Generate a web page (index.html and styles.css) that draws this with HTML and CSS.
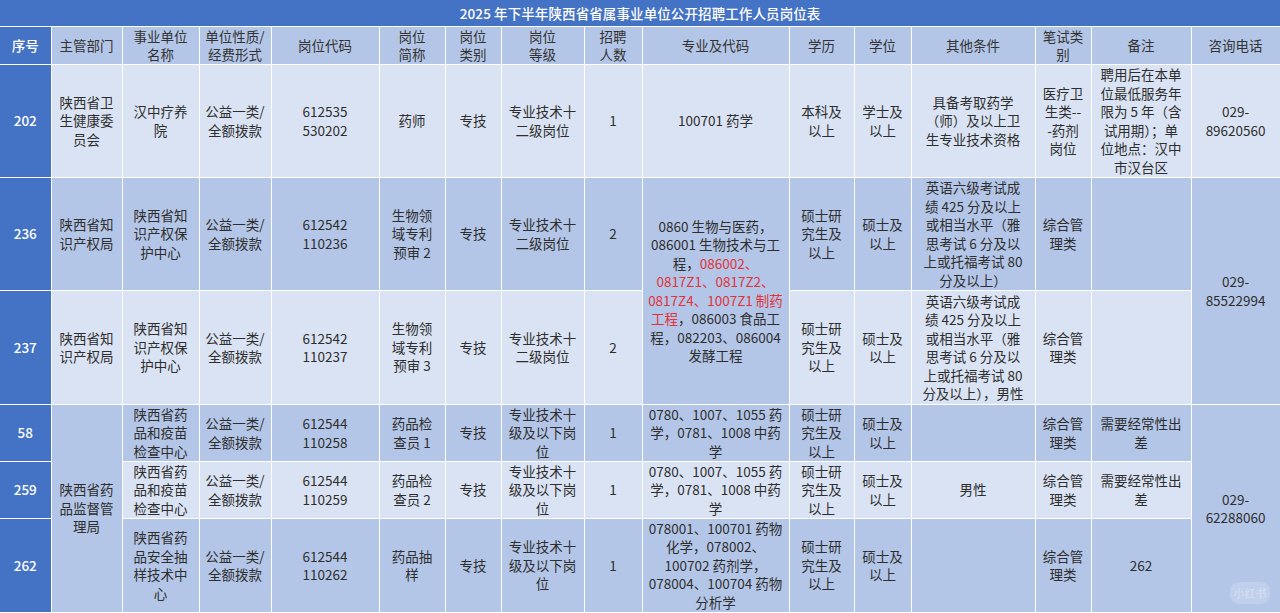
FILE: index.html
```html
<!DOCTYPE html>
<html lang="zh-CN">
<head>
<meta charset="utf-8">
<title>岗位表</title>
<link rel="stylesheet" href="styles.css">
</head>
<body>
<div class="page">
<table class="jobs">
<colgroup>
<col style="width:51px"><col style="width:71px"><col style="width:77px"><col style="width:72px"><col style="width:108px"><col style="width:66px"><col style="width:56px"><col style="width:83px"><col style="width:58px"><col style="width:147px"><col style="width:65px"><col style="width:57px"><col style="width:124px"><col style="width:56px"><col style="width:100px"><col style="width:89px">
</colgroup>
<tr class="r-title"><td colspan="16" class="title">2025 年下半年陕西省省属事业单位公开招聘工作人员岗位表</td></tr>
<tr class="r-head">
<td class="idx">序号</td><td>主管部门</td><td>事业单位<br>名称</td><td>单位性质/<br>经费形式</td><td>岗位代码</td><td>岗位<br>简称</td><td>岗位<br>类别</td><td>岗位<br>等级</td><td>招聘<br>人数</td><td>专业及代码</td><td>学历</td><td>学位</td><td>其他条件</td><td>笔试类<br>别</td><td>备注</td><td>咨询电话</td>
</tr>
<tr class="r-a light">
<td class="idx">202</td><td>陕西省卫<br>生健康委<br>员会</td><td>汉中疗养<br>院</td><td>公益一类/<br>全额拨款</td><td>612535<br>530202</td><td>药师</td><td>专技</td><td>专业技术十<br>二级岗位</td><td>1</td><td>100701 药学</td><td>本科及<br>以上</td><td>学士及<br>以上</td><td>具备考取药学<br>（师）及以上卫<br>生专业技术资格</td><td>医疗卫<br>生类--<br>-药剂<br>岗位</td><td>聘用后在本单<br>位最低服务年<br>限为 5 年（含<br>试用期）；单<br>位地点：汉中<br>市汉台区</td><td>029-<br>89620560</td>
</tr>
<tr class="r-b mid">
<td class="idx">236</td><td>陕西省知<br>识产权局</td><td>陕西省知<br>识产权保<br>护中心</td><td>公益一类/<br>全额拨款</td><td>612542<br>110236</td><td>生物领<br>域专利<br>预审 2</td><td>专技</td><td>专业技术十<br>二级岗位</td><td>2</td><td rowspan="2" class="mid">0860 生物与医药，<br>086001 生物技术与工<br>程，<span class="red">086002、<br>0817Z1、0817Z2、<br>0817Z4、1007Z1 制药<br>工程</span>，086003 食品工<br>程，082203、086004<br>发酵工程</td><td>硕士研<br>究生及<br>以上</td><td>硕士及<br>以上</td><td>英语六级考试成<br>绩 425 分及以上<br>或相当水平（雅<br>思考试 6 分及以<br>上或托福考试 80<br>分及以上）</td><td>综合管<br>理类</td><td></td><td rowspan="2" class="mid">029-<br>85522994</td>
</tr>
<tr class="r-c light">
<td class="idx">237</td><td>陕西省知<br>识产权局</td><td>陕西省知<br>识产权保<br>护中心</td><td>公益一类/<br>全额拨款</td><td>612542<br>110237</td><td>生物领<br>域专利<br>预审 3</td><td>专技</td><td>专业技术十<br>二级岗位</td><td>2</td><td>硕士研<br>究生及<br>以上</td><td>硕士及<br>以上</td><td>英语六级考试成<br>绩 425 分及以上<br>或相当水平（雅<br>思考试 6 分及以<br>上或托福考试 80<br>分及以上），男性</td><td>综合管<br>理类</td><td></td>
</tr>
<tr class="r-d mid">
<td class="idx">58</td><td rowspan="3" class="mid">陕西省药<br>品监督管<br>理局</td><td>陕西省药<br>品和疫苗<br>检查中心</td><td>公益一类/<br>全额拨款</td><td>612544<br>110258</td><td>药品检<br>查员 1</td><td>专技</td><td>专业技术十<br>级及以下岗<br>位</td><td>1</td><td>0780、1007、1055 药<br>学，0781、1008 中药<br>学</td><td>硕士研<br>究生及<br>以上</td><td>硕士及<br>以上</td><td></td><td>综合管<br>理类</td><td>需要经常性出<br>差</td><td rowspan="3" class="mid">029-<br>62288060</td>
</tr>
<tr class="r-d light">
<td class="idx">259</td><td>陕西省药<br>品和疫苗<br>检查中心</td><td>公益一类/<br>全额拨款</td><td>612544<br>110259</td><td>药品检<br>查员 2</td><td>专技</td><td>专业技术十<br>级及以下岗<br>位</td><td>1</td><td>0780、1007、1055 药<br>学，0781、1008 中药<br>学</td><td>硕士研<br>究生及<br>以上</td><td>硕士及<br>以上</td><td>男性</td><td>综合管<br>理类</td><td>需要经常性出<br>差</td>
</tr>
<tr class="r-e mid">
<td class="idx">262</td><td>陕西省药<br>品安全抽<br>样技术中<br>心</td><td>公益一类/<br>全额拨款</td><td>612544<br>110262</td><td>药品抽<br>样</td><td>专技</td><td>专业技术十<br>级及以下岗<br>位</td><td>1</td><td>078001、100701 药物<br>化学，078002、<br>100702 药剂学，<br>078004、100704 药物<br>分析学</td><td>硕士研<br>究生及<br>以上</td><td>硕士及<br>以上</td><td></td><td>综合管<br>理类</td><td>262</td>
</tr>
</table>
<div class="wm">小红书</div>
</div>
</body>
</html>
```

FILE: styles.css
```css
html, body {
  margin: 0;
  padding: 0;
  background: #b4c6e7;
}
.page {
  position: relative;
  width: 1280px;
  height: 613px;
  overflow: hidden;
}
.jobs {
  width: 1280px;
  table-layout: fixed;
  border-collapse: collapse;
  font-family: "Noto Sans CJK SC", "Noto Sans", sans-serif;
  font-size: 13.5px;
  line-height: 18.5px;
  color: #2e2e2e;
}
.jobs td {
  border: 1.5px solid #ffffff;
  padding: 0 2px;
  text-align: center;
  vertical-align: middle;
  white-space: nowrap;
  overflow: hidden;
}
.r-title { height: 26px; }
.r-head { height: 38px; }
.r-a { height: 113px; }
.r-b { height: 113px; }
.r-c { height: 114px; }
.r-d { height: 57px; }
.r-e { height: 94px; }
.title {
  background: #4472c4;
  color: #ffffff;
  font-weight: 500;
  letter-spacing: 0.1px;
}
.r-title td { border-top: none; border-left: none; border-right: none; }
.r-head td { background: #b4c6e7; color: #333; }
.light td { background: #dae3f3; }
.mid td, td.mid { background: #b4c6e7; }
.jobs td.idx {
  background: #4472c4;
  color: #ffffff;
  font-weight: 500;
  border-left: none;
}
.red { color: #e0333a; }
.wm {
  position: absolute;
  right: 10px;
  bottom: 9px;
  width: 40px;
  height: 22px;
  border-radius: 9px;
  background: rgba(255, 255, 255, 0.16);
  color: rgba(255, 255, 255, 0.28);
  font-family: "Noto Sans CJK SC", sans-serif;
  font-size: 11px;
  font-weight: 700;
  line-height: 22px;
  text-align: center;
}
```
